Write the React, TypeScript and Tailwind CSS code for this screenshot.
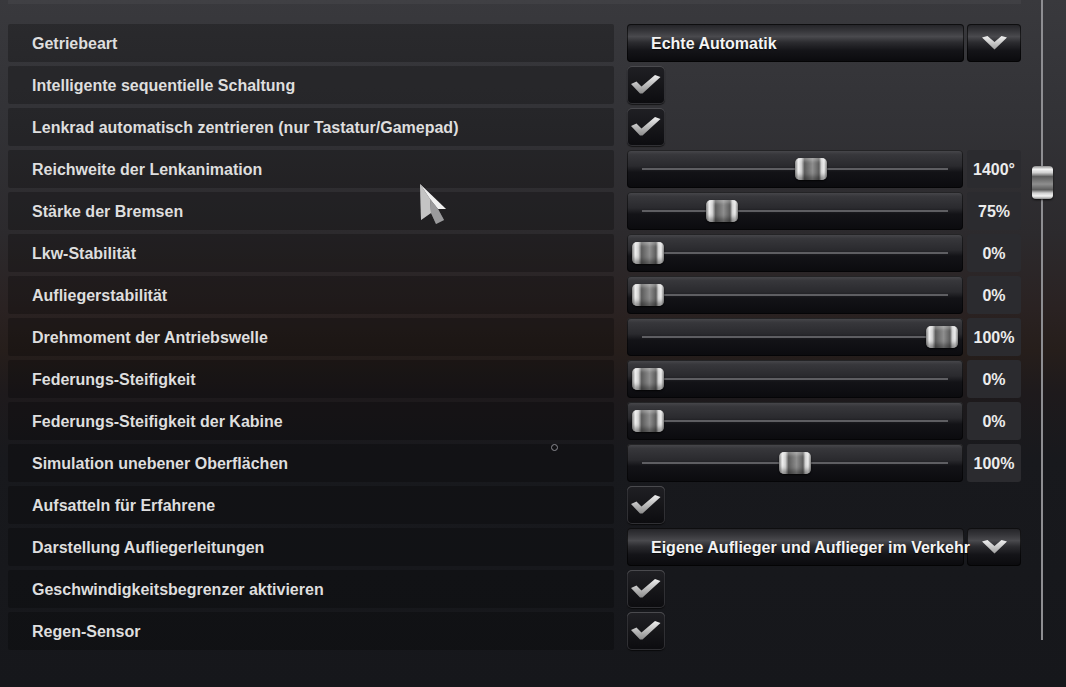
import React from 'react';

type Row =
  | { label: string; kind: 'select'; value: string }
  | { label: string; kind: 'check' }
  | { label: string; kind: 'slider'; pos: number; value: string };

const rows: Row[] = [
  { label: 'Getriebeart', kind: 'select', value: 'Echte Automatik' },
  { label: 'Intelligente sequentielle Schaltung', kind: 'check' },
  { label: 'Lenkrad automatisch zentrieren (nur Tastatur/Gamepad)', kind: 'check' },
  { label: 'Reichweite der Lenkanimation', kind: 'slider', pos: 168, value: '1400°' },
  { label: 'Stärke der Bremsen', kind: 'slider', pos: 79, value: '75%' },
  { label: 'Lkw-Stabilität', kind: 'slider', pos: 5, value: '0%' },
  { label: 'Aufliegerstabilität', kind: 'slider', pos: 5, value: '0%' },
  { label: 'Drehmoment der Antriebswelle', kind: 'slider', pos: 299, value: '100%' },
  { label: 'Federungs-Steifigkeit', kind: 'slider', pos: 5, value: '0%' },
  { label: 'Federungs-Steifigkeit der Kabine', kind: 'slider', pos: 5, value: '0%' },
  { label: 'Simulation unebener Oberflächen', kind: 'slider', pos: 152, value: '100%' },
  { label: 'Aufsatteln für Erfahrene', kind: 'check' },
  { label: 'Darstellung Aufliegerleitungen', kind: 'select', value: 'Eigene Auflieger und Auflieger im Verkehr' },
  { label: 'Geschwindigkeitsbegrenzer aktivieren', kind: 'check' },
  { label: 'Regen-Sensor', kind: 'check' },
];

const glossy =
  'bg-[linear-gradient(to_bottom,#222226_0%,#38383c_20%,#4a4a4e_33%,#2c2c30_48%,#141418_70%,#0a0a0d_100%)]';

const Chevron = () => (
  <svg width="25" height="14" viewBox="0 0 25 14">
    <defs>
      <linearGradient id="chev" x1="0" y1="0" x2="0" y2="1">
        <stop offset="0" stopColor="#f2f2f2" />
        <stop offset="1" stopColor="#a0a0a0" />
      </linearGradient>
    </defs>
    <path d="M0 1.5 L5.5 0 L12.5 6 L19.5 0 L25 1.5 L12.5 13.5 Z" fill="url(#chev)" />
  </svg>
);

const Select = ({ value }: { value: string }) => (
  <div className="flex gap-[3px] h-full">
    <div className={`w-[337px] h-full rounded-[4px] ${glossy} shadow-[inset_0_0_0_1px_rgba(0,0,0,0.6)] flex items-center pl-6 pt-[2px]`}>
      <span className="relative z-10 whitespace-nowrap text-[16px] font-bold text-[#f4f4f4] [text-shadow:0_1px_1px_rgba(0,0,0,0.8)]">
        {value}
      </span>
    </div>
    <div className={`w-[54px] h-full rounded-[4px] ${glossy} shadow-[inset_0_0_0_1px_rgba(0,0,0,0.6)] flex items-center justify-center`}>
      <Chevron />
    </div>
  </div>
);

const Check = () => (
  <div className="w-[38px] h-[38px] rounded-[5px] bg-[linear-gradient(to_bottom,#202024,#0c0c0f)] shadow-[inset_0_1px_0_#4a4a4e,inset_0_0_0_1px_#303034,0_1px_1px_rgba(0,0,0,0.6)] flex items-center justify-center">
    <svg width="30" height="20" viewBox="0 0 30 20">
      <defs>
        <linearGradient id="chk" x1="0" y1="0" x2="0" y2="1">
          <stop offset="0" stopColor="#f0f0f0" />
          <stop offset="1" stopColor="#8c8c8c" />
        </linearGradient>
      </defs>
      <path d="M0 9 L5.5 6.5 L10.5 11.5 L24 0 L29.5 2 L11.5 18.5 L9 18.5 Z" fill="url(#chk)" />
    </svg>
  </div>
);

const Slider = ({ pos, value }: { pos: number; value: string }) => (
  <div className="flex gap-[4px] h-full">
    <div className="relative w-[336px] h-full rounded-[4px] bg-[linear-gradient(to_bottom,#4a4a4e_0%,#37373b_12%,#2a2a2e_42%,#131317_58%,#0b0b0e_100%)] shadow-[inset_0_0_0_1px_rgba(0,0,0,0.5)]">
      <div className="absolute left-[15px] right-[15px] top-[18px] h-[2px] bg-[#5e5e62]" />
      <div
        className="absolute top-[8px] w-[32px] h-[22px] rounded-[5px] bg-[linear-gradient(to_right,#8c8c8c_0%,#f4f4f4_10%,#d0d0d0_20%,#5c5c5c_30%,#8e8e8e_55%,#5c5c5c_75%,#d0d0d0_82%,#f4f4f4_91%,#8c8c8c_100%)] shadow-[inset_0_3px_3px_rgba(255,255,255,0.25),inset_0_-4px_4px_rgba(0,0,0,0.35),0_1px_2px_rgba(0,0,0,0.8)]"
        style={{ left: pos }}
      />
    </div>
    <div className="w-[54px] h-full rounded-[3px] bg-[#2b2b2f] flex items-center justify-center pt-[2px] text-[16px] font-bold text-[#ececec]">
      {value}
    </div>
  </div>
);

export default function App() {
  return (
    <div className="relative w-[1066px] h-[687px] overflow-hidden font-['Liberation_Sans',Arial,sans-serif] bg-[linear-gradient(to_bottom,#39393d_0%,#323236_18%,#2c2a2d_34%,#2a2222_45%,#261e1b_51%,#1e1a1c_57%,#18191d_67%,#16171b_100%)]">
      <div className="flex">
        <div className="pl-[8px] w-[1021px]">
          <div className="h-[4px] w-[1013px] bg-white/[0.04]" />
          <div className="flex flex-col gap-[4px] pt-[20px]">
            {rows.map((r) => (
              <div key={r.label} className="flex h-[38px]">
                <div className="w-[606px] h-full rounded-[2px] bg-black/25 flex items-center pl-6 pt-[2px] text-[16px] font-bold text-[#dedede] whitespace-nowrap">
                  {r.label}
                </div>
                <div className="ml-[13px] h-full">
                  {r.kind === 'select' && <Select value={r.value} />}
                  {r.kind === 'check' && <Check />}
                  {r.kind === 'slider' && <Slider pos={r.pos} value={r.value} />}
                </div>
              </div>
            ))}
          </div>
        </div>
        <div className="relative ml-[11px] w-[21px] h-[640px]">
          <div className="absolute left-[9px] top-0 bottom-0 w-[2px] bg-[#8e8e92]" />
          <div className="absolute left-0 top-[166px] w-[21px] h-[33px] rounded-[4px] bg-[linear-gradient(to_bottom,#8c8c8c_0%,#f4f4f4_10%,#d0d0d0_20%,#5c5c5c_32%,#8e8e8e_55%,#5c5c5c_72%,#d0d0d0_82%,#f4f4f4_91%,#8c8c8c_100%)] shadow-[0_1px_2px_rgba(0,0,0,0.8)]" />
        </div>
      </div>

      {/* mouse cursor */}
      <svg className="absolute left-[418px] top-[182px]" width="30" height="46" viewBox="0 0 30 46">
        <path d="M2 2 L28 27 L20 27 L26 38 L18 42 L13 31 L3 38 Z" fill="#5a5a5c" />
        <path d="M2 2 L28 27 L20 27 L12 17 Z" fill="#f0f0f0" />
        <path d="M2 2 L12 17 L13 31 L3 38 Z" fill="#c4c4c4" />
        <path d="M12 17 L20 27 L26 38 L18 42 L13 31 Z" fill="#9a9a9c" />
      </svg>

      {/* small circle */}
      <div className="absolute left-[551px] top-[444px] w-[7px] h-[7px] rounded-full border-[1.5px] border-[#8a8a90]" />
    </div>
  );
}
